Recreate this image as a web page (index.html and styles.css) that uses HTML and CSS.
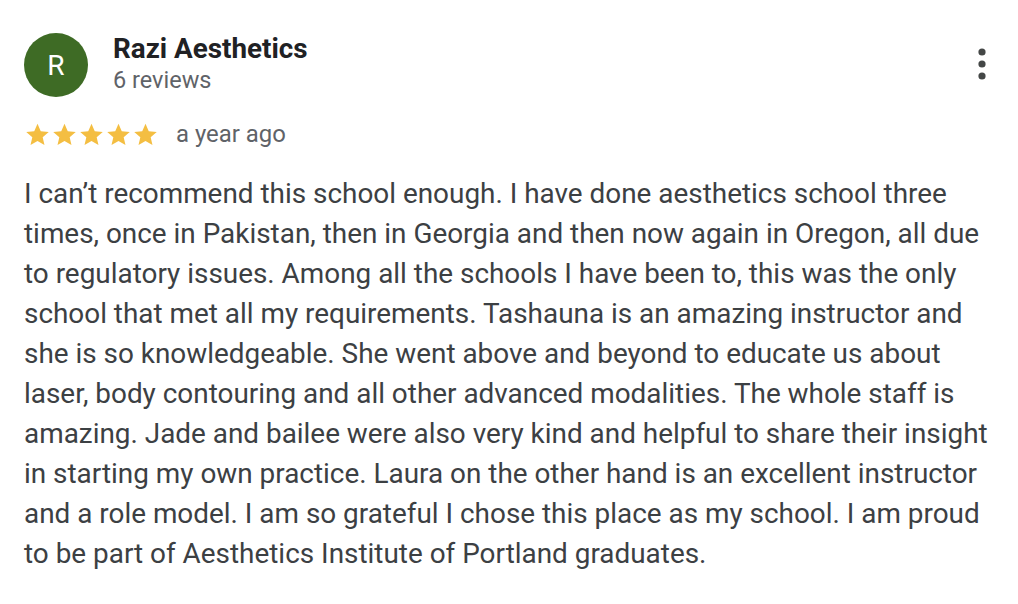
FILE: index.html
```html
<!DOCTYPE html>
<html>
<head>
<meta charset="utf-8">
<link rel="stylesheet" href="styles.css">
</head>
<body>
<div class="review">
  <div class="header">
    <div class="avatar">R</div>
    <div class="who">
      <div class="name">Razi Aesthetics</div>
      <div class="count">6 reviews</div>
    </div>
    <div class="more">
      <svg width="12" height="36" viewBox="0 0 12 36"><circle cx="6" cy="6" r="3.6" fill="#444746"/><circle cx="6" cy="18" r="3.6" fill="#444746"/><circle cx="6" cy="30" r="3.6" fill="#444746"/></svg>
    </div>
  </div>
  <div class="rating">
    <div class="stars">
      <svg viewBox="0 0 24 24" width="27" height="27"><path d="M12 2.5l2.9 6.6 7.1.6-5.4 4.7 1.6 7-6.2-3.7-6.2 3.7 1.6-7L2 9.7l7.1-.6z" fill="#f4be42"/></svg>
      <svg viewBox="0 0 24 24" width="27" height="27"><path d="M12 2.5l2.9 6.6 7.1.6-5.4 4.7 1.6 7-6.2-3.7-6.2 3.7 1.6-7L2 9.7l7.1-.6z" fill="#f4be42"/></svg>
      <svg viewBox="0 0 24 24" width="27" height="27"><path d="M12 2.5l2.9 6.6 7.1.6-5.4 4.7 1.6 7-6.2-3.7-6.2 3.7 1.6-7L2 9.7l7.1-.6z" fill="#f4be42"/></svg>
      <svg viewBox="0 0 24 24" width="27" height="27"><path d="M12 2.5l2.9 6.6 7.1.6-5.4 4.7 1.6 7-6.2-3.7-6.2 3.7 1.6-7L2 9.7l7.1-.6z" fill="#f4be42"/></svg>
      <svg viewBox="0 0 24 24" width="27" height="27"><path d="M12 2.5l2.9 6.6 7.1.6-5.4 4.7 1.6 7-6.2-3.7-6.2 3.7 1.6-7L2 9.7l7.1-.6z" fill="#f4be42"/></svg>
    </div>
    <span class="when">a year ago</span>
  </div>
  <p class="text">I can’t recommend this school enough. I have done aesthetics school three times, once in Pakistan, then in Georgia and then now again in Oregon, all due to regulatory issues. Among all the schools I have been to, this was the only school that met all my requirements. Tashauna is an amazing instructor and she is so knowledgeable. She went above and beyond to educate us about laser, body contouring and all other advanced modalities. The whole staff is amazing. Jade and bailee were also very kind and helpful to share their insight in starting my own practice. Laura on the other hand is an excellent instructor and a role model. I am so grateful I chose this place as my school. I am proud to be part of Aesthetics Institute of Portland graduates.</p>
</div>
</body>
</html>
```
FILE: styles.css
```css
html, body {
  margin: 0;
  padding: 0;
  background: #ffffff;
}
body {
  font-family: Roboto, "Liberation Sans", sans-serif;
}
.review {
  padding: 33px 24px 0 24px;
  width: 970px;
}
.header {
  display: flex;
  align-items: flex-start;
}
.avatar {
  width: 64px;
  height: 64px;
  border-radius: 50%;
  background: #3e6b25;
  color: #ffffff;
  font-size: 28px;
  display: flex;
  align-items: center;
  justify-content: center;
  flex-shrink: 0;
}
.who {
  margin-left: 25px;
  flex: 1;
}
.name {
  font-size: 27.8px;
  font-weight: 700;
  color: #202124;
  line-height: 31px;
}
.count {
  font-size: 23.5px;
  color: #5f6368;
  line-height: 32px;
}
.more {
  padding-top: 13px;
  padding-right: 6px;
}
.more svg {
  display: block;
}
.rating {
  display: flex;
  align-items: center;
  margin-top: 19px;
  height: 36px;
}
.stars {
  display: flex;
  gap: 0;
}
.stars svg {
  display: block;
}
.when {
  margin-left: 17px;
  font-size: 23.9px;
  color: #5f6368;
}
.text {
  margin: 22px 0 0 0;
  font-size: 27.9px;
  line-height: 40px;
  color: #3c4043;
}
```
